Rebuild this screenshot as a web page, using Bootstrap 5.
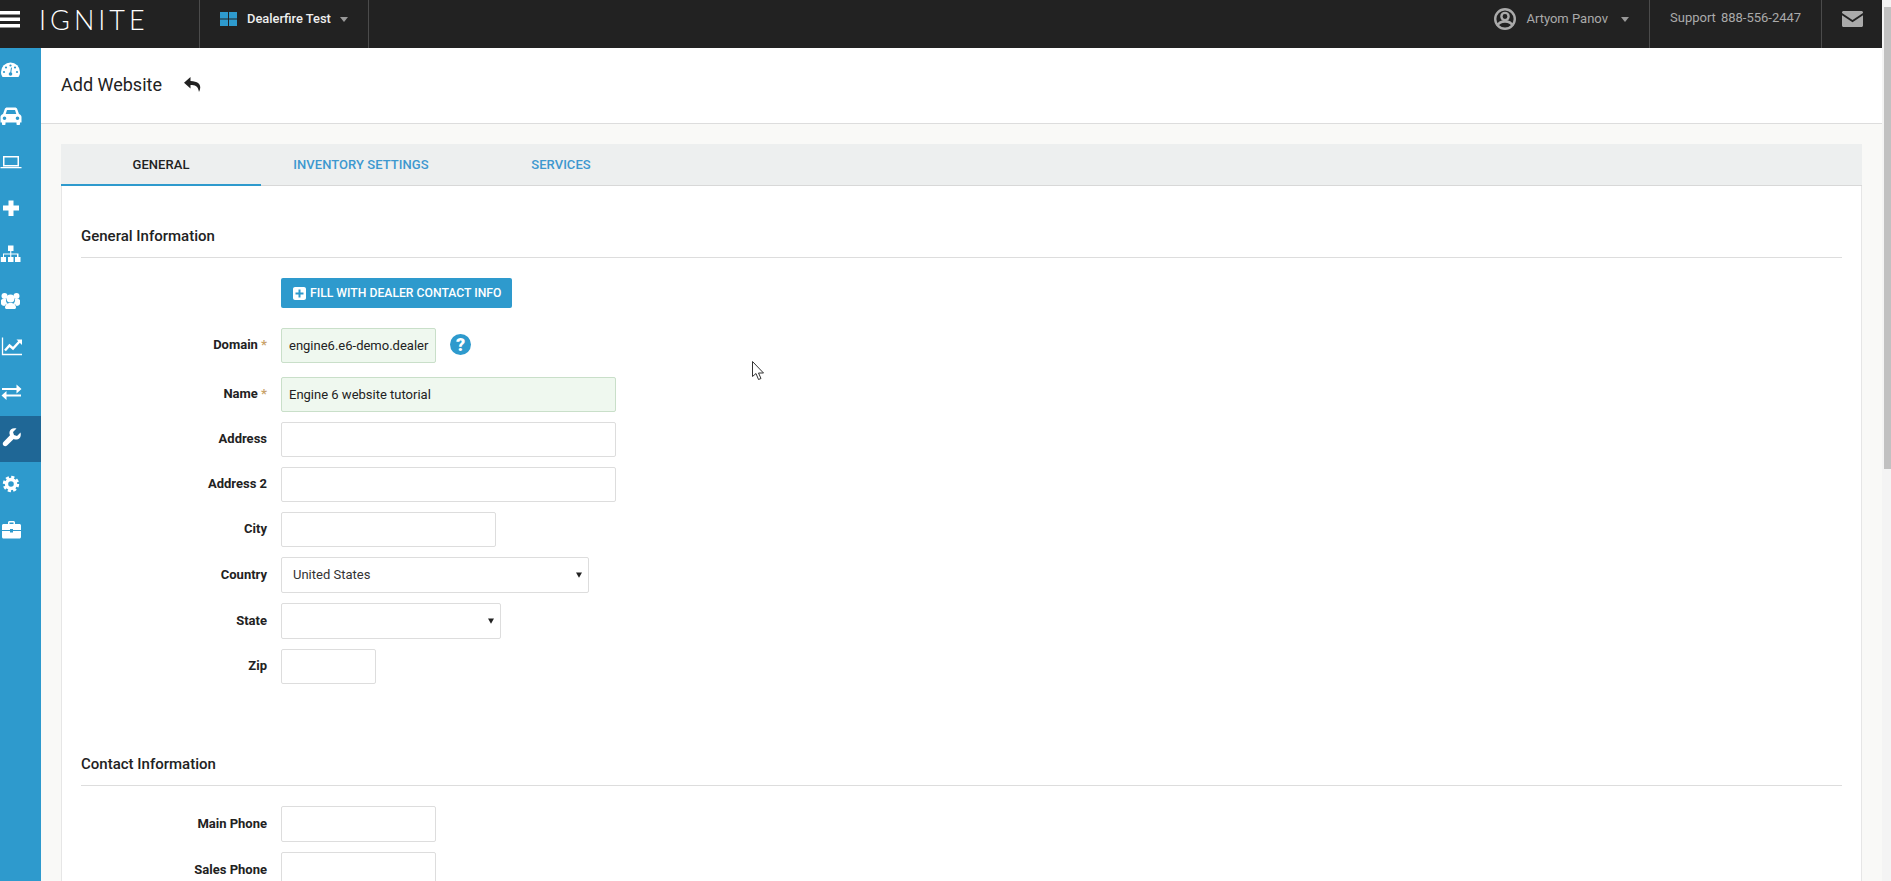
<!DOCTYPE html>
<html lang="en">
<head>
<meta charset="utf-8">
<title>Add Website</title>
<link href="https://cdn.jsdelivr.net/npm/bootstrap@5.3.0/dist/css/bootstrap.min.css" rel="stylesheet">
<style>
html,body{height:881px;overflow:hidden;}
body{font-family:Roboto,"Liberation Sans",sans-serif;font-size:12px;color:#222;background:#fff;position:relative;}
.app-shell{height:881px;width:1891px;overflow:hidden;}
.app-main{width:1882px;flex:none;}
.fake-gutter{width:9px;flex:none;background:#f4f4f4;padding:7px 0 0 2px;}
.fake-thumb{height:462px;background:#c1c1c1;}
.top-bar{height:48px;background:#222;padding:0;flex-wrap:nowrap;flex:none;}
.burger{width:20px;height:17px;margin:-10px 0 0 0;flex:none;}
.logo-text{margin-left:19px;width:160px;font-family:Lato,sans-serif;font-weight:300;font-size:27px;letter-spacing:4px;color:#fff;line-height:1;padding-bottom:9px;}
.bar-cell{height:48px;padding-bottom:10px;border-left:1px solid #4b4b4b;}
.dealer-cell{width:170px;border-right:1px solid #4b4b4b;padding-left:20px;color:#eee;font-size:12.900px;font-weight:500;}
.dealer-cell svg{margin-right:10px;}
.tiny-caret{width:0;height:0;border:4px solid transparent;border-top:5px solid #999;border-bottom:0;margin-left:9px;}
.user-cell{color:#aaa;font-size:13px;width:auto;margin-left:auto;padding-right:20px;height:48px;padding-bottom:10px;}
.user-cell svg{margin-right:10px;}
.user-cell .tiny-caret{margin-left:13px;}
.support-cell{width:172px;padding-left:20px;padding-bottom:12px;color:#aaa;font-size:13px;}
.support-cell span+span{margin-left:5px;}
.mail-cell{width:61px;padding-left:20px;}
.side-rail{width:41px;flex:none;background:#2e9acd;height:833px;}
.side-link{height:46px;padding:0 0 2px 0;color:#fff;display:flex;align-items:center;}
.side-link.on{background:#1f6796;}
.content-col{min-width:0;background:#f9f9f7;}
.page-head{height:76px;background:#fff;border-bottom:1px solid #ddd;padding:0 0 1px 20px;}
.page-head h1{font-size:18px;font-weight:400;margin:0;color:#222;}
.page-head svg{margin:0 0 1px 22px;}
.page-body{padding:20px 20px 0;}
.tab-strip{height:42px;background:#edefef;box-shadow:inset 0 -1px 0 #d8d8d8;}
.tab-item{width:200px;height:42px;padding:1px 0 0;display:flex;align-items:center;justify-content:center;font-size:13px;font-weight:500;letter-spacing:.06px;color:#3d98cf;border-bottom:2px solid transparent;text-decoration:none;}
.tab-item.active,.tab-item.active:hover{color:#222;border-bottom-color:#2e9acd;}
.form-panel{background:#fff;border:0;border-left:1px solid #e6e6e6;border-right:1px solid #e6e6e6;border-radius:0;padding:40px 19px 40px;display:block;}
.sect-title{font-size:15px;font-weight:500;line-height:20px;color:#222;padding-bottom:11px;border-bottom:1px solid #ddd;margin-bottom:20px;}
.fld-row{display:flex;align-items:center;margin-bottom:10px;}
.fld-label{margin:0 14px 1px 0;width:186px;flex:none;text-align:right;font-weight:700;font-size:13px;color:#222;}
.req{color:#c9a36a;font-weight:700;}
.plain-input{height:35px;padding:0 5px 0 7px;border:1px solid #ddd;border-radius:2px;font-size:13px;color:#222;background:#fff;flex:none;box-shadow:none;}
.plain-input.tall{height:36px;}
.plain-input.ok{background:#eff8ef;border-color:#c9dfc9;}
.plain-select{height:36px;padding:0 24px 0 11px;border:1px solid #ddd;border-radius:2px;font-size:13px;color:#333;flex:none;background-size:6px 6px;background-position:right 6px center;background-image:url("data:image/svg+xml,%3csvg xmlns='http://www.w3.org/2000/svg' viewBox='0 0 8 7'%3e%3cpath d='M0 0h8L4 7z' fill='%23222'/%3e%3c/svg%3e");}
.w-155{width:155px;}.w-335{width:335px;}.w-215{width:215px;}.w-308{width:308px;}.w-220{width:220px;}.w-95{width:95px;}
.fill-btn{margin-left:200px;width:231px;height:30px;padding:0 0 0 12px;background:#2e9acd;border:0;border-radius:2px;font-size:12.200px;font-weight:500;color:#fff;display:flex;align-items:center;margin-bottom:20px;white-space:nowrap;}
.fill-btn svg{margin-right:4px;}
.help-dot{width:21px;height:21px;border-radius:50%;background:#2e9acd;color:#fff;font-weight:900;font-size:18px;line-height:21px;text-align:center;margin:0 0 3px 14px;flex:none;}
.row-gap14{margin-bottom:14px;}
.sect-gap{margin-top:70px;}
.mouse-arrow{position:absolute;left:752px;top:361px;}
</style>
</head>
<body>
<div class="app-shell d-flex">
  <div class="app-main d-flex flex-column">
    <nav class="navbar top-bar">
      <svg class="burger" viewBox="0 0 20 17"><path d="M0 0h20v3.500H0zM0 6.500h20V10H0zM0 13h20v3.500H0z" fill="#fff"/></svg>
      <span class="logo-text">IGNITE</span>
      <div class="bar-cell dealer-cell d-flex align-items-center">
        <svg width="17" height="14" viewBox="0 0 17 14"><path d="M0 0h8v6.500H0zM9 0h8v6.500H9zM0 7.500h8V14H0zM9 7.500h8V14H9z" fill="#2e9acd"/></svg>
        <span>Dealerfire Test</span><span class="tiny-caret"></span>
      </div>
      <div class="user-cell d-flex align-items-center">
        <svg width="22" height="22" viewBox="0 0 22 22"><circle cx="11" cy="11" r="9.800" fill="none" stroke="#aaa" stroke-width="2.400"/><circle cx="11" cy="8.500" r="3.600" fill="none" stroke="#aaa" stroke-width="2.400"/><path d="M3.500 18c1-3.500 4-4.500 7.500-4.500s6.500 1 7.500 4.500" fill="none" stroke="#aaa" stroke-width="2.400"/></svg>
        <span>Artyom Panov</span><span class="tiny-caret"></span>
      </div>
      <div class="bar-cell support-cell d-flex align-items-center"><span>Support</span><span>888-556-2447</span></div>
      <div class="bar-cell mail-cell d-flex align-items-center">
        <svg width="21" height="16" viewBox="0 0 21 16"><path d="M1.500 0h18c.8 0 1.500.7 1.500 1.500V2l-10.500 7L0 2v-.5C0 .7.700 0 1.500 0zM0 4.300l10.500 7 10.500-7v10.200c0 .8-.7 1.500-1.500 1.500h-18C.7 16 0 15.300 0 14.500z" fill="#aaa"/></svg>
      </div>
    </nav>
    <div class="d-flex flex-grow-1">
      <nav class="side-rail nav flex-column flex-nowrap">
        <a class="side-link" href="#"><svg width="22" height="22" viewBox="0 0 22 22"><path d="M1 13a9.500 9.500 0 0 1 19 0c0 2-.5 3.500-1.500 5h-16C1.500 16.500 1 15 1 13z" fill="#fff"/><g fill="#2e9acd"><circle cx="4" cy="13" r="1.100"/><circle cx="6" cy="8.500" r="1.100"/><circle cx="10.500" cy="6.500" r="1.100"/><circle cx="15" cy="8.500" r="1.100"/><circle cx="17" cy="13" r="1.100"/><circle cx="10.500" cy="15" r="1.800"/><path d="M10 15l1-6.500 1 .2-1 6.500z"/></g></svg></a>
        <a class="side-link" href="#"><svg width="22" height="22" viewBox="0 0 22 22"><path fill-rule="evenodd" d="M4.800 4C5.200 3 6 2.500 7 2.500h8c1 0 1.800.5 2.200 1.500l1.800 5c1.500.5 2.500 1.500 2.500 3v5.500H20v1.500c0 .6-.4 1-1 1h-1.500c-.6 0-1-.4-1-1V17.500h-11V19c0 .6-.4 1-1 1H3c-.6 0-1-.4-1-1v-1.500H.5V12c0-1.500 1-2.500 2.500-3zM7 5L5.700 9h10.600L15 5zM4.500 11.500a1.800 1.800 0 1 0 0 3.600 1.800 1.800 0 0 0 0-3.600zm13 0a1.800 1.800 0 1 0 0 3.600 1.800 1.800 0 0 0 0-3.600z" fill="#fff"/></svg></a>
        <a class="side-link" href="#"><svg width="22" height="22" viewBox="0 0 22 22"><path fill-rule="evenodd" d="M3 5h16v10.500H3zM4.500 6.500v7.500h13V6.500zM.5 16h21v1.300H.5z" fill="#fff"/></svg></a>
        <a class="side-link" href="#"><svg width="22" height="22" viewBox="0 0 22 22"><path d="M8.500 3.500h5v5h5.500v5h-5.500v5.500h-5v-5.500H3v-5h5.500z" fill="#fff"/></svg></a>
        <a class="side-link" href="#"><svg width="22" height="22" viewBox="0 0 22 22"><path fill="#fff" d="M8 2.500h5.500V8H11.300v2.500H18.500V14h2v5h-5.500v-5h2V11.500H11.300V14h2.200v5H8v-5h2.200V11.500H4V14h2v5H.8v-5H3V10.500h7.200V8H8z"/></svg></a>
        <a class="side-link" href="#"><svg width="22" height="22" viewBox="0 0 22 22"><g fill="#fff"><circle cx="4.500" cy="7" r="3"/><circle cx="16.500" cy="7" r="3"/><path d="M1 11.500c0-1 1-1.500 2.500-1.500h2.500c-.3 2 .5 3.500 1.500 4.500-1.500.6-2.500 1.500-3 2.500C2.500 17 1 16 1 14.500zM20 11.500c0-1-1-1.500-2.500-1.500H15c.3 2-.5 3.500-1.500 4.500 1.500.6 2.500 1.500 3 2.500 2 0 3.500-1 3.500-2.500z"/><circle cx="10.500" cy="9.500" r="4"/><path d="M6 15.500c1-1 2.500-1.500 4.500-1.500s3.500.5 4.500 1.500c.7 1 1 2 1 3 0 .8-.7 1.500-1.500 1.500h-8C5.700 20 5 19.300 5 18.500c0-1 .3-2 1-3z"/></g></svg></a>
        <a class="side-link" href="#"><svg width="22" height="22" viewBox="0 0 22 22"><g fill="none" stroke="#fff"><path d="M2.500 2.500v17H23" stroke-width="1.300"/><path d="M5 15.500l4.500-5 3.500 3 6.500-7" stroke-width="2.400"/></g><path d="M16.500 4.500H22V10z" fill="#fff"/></svg></a>
        <a class="side-link" href="#"><svg width="22" height="22" viewBox="0 0 22 22"><path d="M2 7h14.500V3.500L21.500 8l-5 4.500V9H2zM21 13.500H6.500V10l-5 4.500 5 4.500v-3.500H21z" fill="#fff"/></svg></a>
        <a class="side-link on" href="#"><svg width="22" height="22" viewBox="0 0 22 22"><path d="M20.500 5.500l-3.500 3.500-3-1-1-3 3.500-3.500C13 .5 10 2 9.500 5c-.2 1.200 0 2.300.5 3.300L3.500 15c-1 1-1 2.500 0 3.500s2.500 1 3.500 0l6.700-6.500c1 .5 2.100.7 3.300.5 3-.5 4.500-3.500 3.500-7z" fill="#fff"/></svg></a>
        <a class="side-link" href="#"><svg width="22" height="22" viewBox="0 0 22 22"><g fill="none" stroke="#fff"><circle cx="11" cy="11" r="4.500" stroke-width="3.400"/><circle cx="11" cy="11" r="6.800" stroke-width="2.800" stroke-dasharray="3.100 2.240"/></g></svg></a>
        <a class="side-link" href="#"><svg width="22" height="22" viewBox="0 0 22 22"><path fill-rule="evenodd" d="M8 5V3.500C8 2.700 8.700 2 9.500 2h4c.8 0 1.500.7 1.500 1.500V5h4.500C20.300 5 21 5.700 21 6.500V11h-8v-1h-3v1H2V6.500C2 5.700 2.700 5 3.500 5zM9.500 3.500V5h4V3.500zM2 12h8v1.500h3V12h8v6c0 .8-.7 1.500-1.500 1.500h-16C2.700 19.500 2 18.800 2 18z" fill="#fff"/></svg></a>
      </nav>
      <main class="content-col flex-grow-1">
        <div class="page-head d-flex align-items-center">
          <h1>Add Website</h1>
          <svg width="17" height="15" viewBox="0 0 17 15"><path d="M6.500 0L0 5.800l6.500 5.700V8c4.500 0 7.500.8 8.500 7 2.500-5 2-10.500-8.500-11z" fill="#222"/></svg>
        </div>
        <div class="page-body">
          <nav class="tab-strip nav flex-nowrap">
            <a class="tab-item active" href="#">GENERAL</a>
            <a class="tab-item" href="#">INVENTORY SETTINGS</a>
            <a class="tab-item" href="#">SERVICES</a>
          </nav>
          <div class="form-panel card">
            <div class="sect-title">General Information</div>
            <button type="button" class="btn fill-btn"><svg width="13" height="13" viewBox="0 0 13 13"><path fill-rule="evenodd" d="M2 0h9c1.100 0 2 .9 2 2v9c0 1.100-.9 2-2 2H2c-1.100 0-2-.9-2-2V2C0 .9.900 0 2 0zm3.500 2.500v3h-3v2h3v3h2v-3h3v-2h-3v-3z" fill="#fff"/></svg>FILL WITH DEALER CONTACT INFO</button>
            <div class="fld-row row-gap14"><label class="fld-label">Domain <span class="req">*</span></label><input class="plain-input ok w-155" value="engine6.e6-demo.dealer"><span class="help-dot">?</span></div>
            <div class="fld-row"><label class="fld-label">Name <span class="req">*</span></label><input class="plain-input ok w-335" value="Engine 6 website tutorial"></div>
            <div class="fld-row"><label class="fld-label">Address</label><input class="plain-input w-335"></div>
            <div class="fld-row"><label class="fld-label">Address 2</label><input class="plain-input w-335"></div>
            <div class="fld-row"><label class="fld-label">City</label><input class="plain-input w-215"></div>
            <div class="fld-row"><label class="fld-label">Country</label><select class="form-select plain-select w-308"><option>United States</option></select></div>
            <div class="fld-row"><label class="fld-label">State</label><select class="form-select plain-select w-220"><option></option></select></div>
            <div class="fld-row"><label class="fld-label">Zip</label><input class="plain-input w-95"></div>
            <div class="sect-title sect-gap">Contact Information</div>
            <div class="fld-row"><label class="fld-label">Main Phone</label><input class="plain-input tall w-155"></div>
            <div class="fld-row"><label class="fld-label">Sales Phone</label><input class="plain-input tall w-155"></div>
          </div>
        </div>
      </main>
    </div>
  </div>
  <div class="fake-gutter"><div class="fake-thumb"></div></div>
</div>
<svg class="mouse-arrow" width="13" height="20" viewBox="0 0 13 20"><path d="M.5.500v15l3.500-3 2.500 6 2.500-1-2.500-5.500h5z" fill="#fff" stroke="#333"/></svg>
<script src="https://cdn.jsdelivr.net/npm/bootstrap@5.3.0/dist/js/bootstrap.bundle.min.js"></script>
</body>
</html>
